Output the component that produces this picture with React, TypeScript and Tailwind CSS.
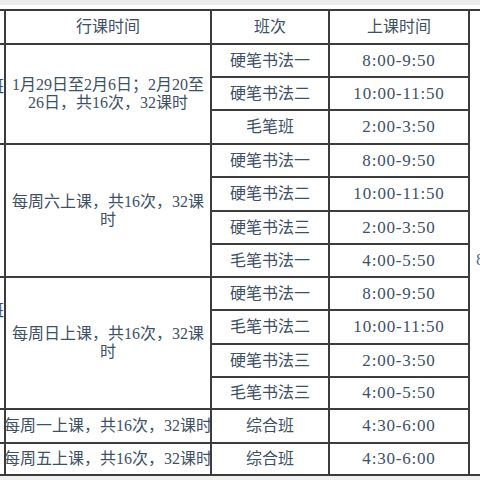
const ROW_START = [
  'row-start-2',
  'row-start-3',
  'row-start-4',
  'row-start-5',
  'row-start-6',
  'row-start-7',
  'row-start-8',
  'row-start-9',
  'row-start-10',
  'row-start-11',
  'row-start-12',
  'row-start-13',
  'row-start-14'
]

const SESSIONS = [
  { name: '硬笔书法一', time: '8:00-9:50' },
  { name: '硬笔书法二', time: '10:00-11:50' },
  { name: '毛笔班', time: '2:00-3:50' },
  { name: '硬笔书法一', time: '8:00-9:50' },
  { name: '硬笔书法二', time: '10:00-11:50' },
  { name: '硬笔书法三', time: '2:00-3:50' },
  { name: '毛笔书法一', time: '4:00-5:50' },
  { name: '硬笔书法一', time: '8:00-9:50' },
  { name: '毛笔书法二', time: '10:00-11:50' },
  { name: '硬笔书法三', time: '2:00-3:50' },
  { name: '毛笔书法三', time: '4:00-5:50' },
  { name: '综合班', time: '4:30-6:00' },
  { name: '综合班', time: '4:30-6:00' }
]

const cell = 'bg-white flex items-center justify-center overflow-hidden'

export default function App() {
  return (
    <div className="w-[480px] h-[480px] overflow-hidden bg-white flex flex-col text-[16px] leading-[18px] text-[#3e5066] font-['Liberation_Serif','Noto_Sans_CJK_SC',serif]">
      <div className="h-[5px] shrink-0 bg-[#ececec]" />
      <div className="h-[4px] shrink-0 bg-white" />

      <div className="grid shrink-0 grid-cols-[4px_204px_116px_138px_1fr] grid-rows-[32px_31px_31px_32px_31px_32px_31px_31px_31px_32px_31px_30px_32px_30px] gap-[2px] bg-[#3c3c3c] py-[2px]">
        {/* header */}
        <div className={`${cell} col-start-1 row-start-1`} />
        <div className={`${cell} col-start-2 row-start-1`}>行课时间</div>
        <div className={`${cell} col-start-3 row-start-1`}>班次</div>
        <div className={`${cell} col-start-4 row-start-1`}>上课时间</div>
        <div className="bg-white col-start-5 row-start-1 row-span-14 overflow-hidden pl-[6px] pt-[240px] whitespace-nowrap text-[17px] text-[#4a6a8c]">
          8
        </div>

        {/* clipped first column */}
        <div className="bg-white col-start-1 row-start-2 row-span-3 overflow-hidden flex justify-end items-start pt-[33px] whitespace-nowrap">
          <span>班</span>
        </div>
        <div className="bg-white col-start-1 row-start-5 row-span-4" />
        <div className="bg-white col-start-1 row-start-9 row-span-4 overflow-hidden flex justify-end items-start pt-[24px] whitespace-nowrap">
          <span>班</span>
        </div>
        <div className="bg-white col-start-1 row-start-13" />
        <div className="bg-white col-start-1 row-start-14" />

        {/* dates */}
        <div className={`${cell} col-start-2 row-start-2 row-span-3 flex-col`}>
          <span>1月29日至2月6日；2月20至</span>
          <span>26日，共16次，32课时</span>
        </div>
        <div className={`${cell} col-start-2 row-start-5 row-span-4 flex-col`}>
          <span>每周六上课，共16次，32课</span>
          <span>时</span>
        </div>
        <div className={`${cell} col-start-2 row-start-9 row-span-4 flex-col`}>
          <span>每周日上课，共16次，32课</span>
          <span>时</span>
        </div>
        <div className={`${cell} col-start-2 row-start-13 whitespace-nowrap`}>
          <span className="shrink-0">每周一上课，共16次，32课时</span>
        </div>
        <div className={`${cell} col-start-2 row-start-14 whitespace-nowrap`}>
          <span className="shrink-0">每周五上课，共16次，32课时</span>
        </div>

        {SESSIONS.map((s, i) => (
          <div key={`n${i}`} className={`${cell} col-start-3 ${ROW_START[i]} whitespace-nowrap`}>
            {s.name}
          </div>
        ))}
        {SESSIONS.map((s, i) => (
          <div key={`t${i}`} className={`${cell} col-start-4 ${ROW_START[i]} text-[17px] tracking-[0.8px] whitespace-nowrap`}>
            {s.time}
          </div>
        ))}
      </div>

      <div className="flex-1 bg-[#efefef]" />
    </div>
  )
}
